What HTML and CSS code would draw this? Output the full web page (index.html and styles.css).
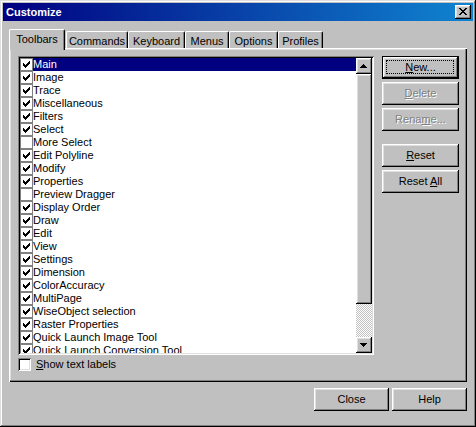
FILE: index.html
```html
<!DOCTYPE html>
<html>
<head>
<meta charset="utf-8">
<title>Customize</title>
<link rel="stylesheet" href="styles.css">
</head>
<body>
<div class="window">
  <div class="titlebar">
    <span class="title">Customize</span>
    <div class="close-btn raised"><svg class="xglyph" width="8" height="7" viewBox="0 0 8 7"><path d="M0 0h2v1H0z M6 0h2v1H6z M1 1h2v1H1z M5 1h2v1H5z M2 2h4v1H2z M3 3h2v1H3z M2 4h4v1H2z M1 5h2v1H1z M5 5h2v1H5z M0 6h2v1H0z M6 6h2v1H6z"/></svg></div>
  </div>
  <div class="content">
    <div class="tabs">
      <div class="tab active t-toolbars">Toolbars</div>
      <div class="tab t-commands">Commands</div>
      <div class="tab t-keyboard">Keyboard</div>
      <div class="tab t-menus">Menus</div>
      <div class="tab t-options">Options</div>
      <div class="tab t-profiles">Profiles</div>
    </div>
    <div class="panel">
      <div class="leftcol">
        <div class="listbox">
          <div class="items">
            <div class="row sel"><span class="cb"><svg class="chk" width="7" height="7" viewBox="0 0 7 7"><path d="M0 2h1v3H0z M1 3h1v3H1z M2 4h1v3H2z M3 3h1v3H3z M4 2h1v3H4z M5 1h1v3H5z M6 0h1v3H6z"/></svg></span><span class="lbl">Main</span></div>
            <div class="row"><span class="cb"><svg class="chk" width="7" height="7" viewBox="0 0 7 7"><path d="M0 2h1v3H0z M1 3h1v3H1z M2 4h1v3H2z M3 3h1v3H3z M4 2h1v3H4z M5 1h1v3H5z M6 0h1v3H6z"/></svg></span><span class="lbl">Image</span></div>
            <div class="row"><span class="cb"><svg class="chk" width="7" height="7" viewBox="0 0 7 7"><path d="M0 2h1v3H0z M1 3h1v3H1z M2 4h1v3H2z M3 3h1v3H3z M4 2h1v3H4z M5 1h1v3H5z M6 0h1v3H6z"/></svg></span><span class="lbl">Trace</span></div>
            <div class="row"><span class="cb"><svg class="chk" width="7" height="7" viewBox="0 0 7 7"><path d="M0 2h1v3H0z M1 3h1v3H1z M2 4h1v3H2z M3 3h1v3H3z M4 2h1v3H4z M5 1h1v3H5z M6 0h1v3H6z"/></svg></span><span class="lbl">Miscellaneous</span></div>
            <div class="row"><span class="cb"><svg class="chk" width="7" height="7" viewBox="0 0 7 7"><path d="M0 2h1v3H0z M1 3h1v3H1z M2 4h1v3H2z M3 3h1v3H3z M4 2h1v3H4z M5 1h1v3H5z M6 0h1v3H6z"/></svg></span><span class="lbl">Filters</span></div>
            <div class="row"><span class="cb"><svg class="chk" width="7" height="7" viewBox="0 0 7 7"><path d="M0 2h1v3H0z M1 3h1v3H1z M2 4h1v3H2z M3 3h1v3H3z M4 2h1v3H4z M5 1h1v3H5z M6 0h1v3H6z"/></svg></span><span class="lbl">Select</span></div>
            <div class="row"><span class="cb"></span><span class="lbl">More Select</span></div>
            <div class="row"><span class="cb"><svg class="chk" width="7" height="7" viewBox="0 0 7 7"><path d="M0 2h1v3H0z M1 3h1v3H1z M2 4h1v3H2z M3 3h1v3H3z M4 2h1v3H4z M5 1h1v3H5z M6 0h1v3H6z"/></svg></span><span class="lbl">Edit Polyline</span></div>
            <div class="row"><span class="cb"><svg class="chk" width="7" height="7" viewBox="0 0 7 7"><path d="M0 2h1v3H0z M1 3h1v3H1z M2 4h1v3H2z M3 3h1v3H3z M4 2h1v3H4z M5 1h1v3H5z M6 0h1v3H6z"/></svg></span><span class="lbl">Modify</span></div>
            <div class="row"><span class="cb"><svg class="chk" width="7" height="7" viewBox="0 0 7 7"><path d="M0 2h1v3H0z M1 3h1v3H1z M2 4h1v3H2z M3 3h1v3H3z M4 2h1v3H4z M5 1h1v3H5z M6 0h1v3H6z"/></svg></span><span class="lbl">Properties</span></div>
            <div class="row"><span class="cb"></span><span class="lbl">Preview Dragger</span></div>
            <div class="row"><span class="cb"><svg class="chk" width="7" height="7" viewBox="0 0 7 7"><path d="M0 2h1v3H0z M1 3h1v3H1z M2 4h1v3H2z M3 3h1v3H3z M4 2h1v3H4z M5 1h1v3H5z M6 0h1v3H6z"/></svg></span><span class="lbl">Display Order</span></div>
            <div class="row"><span class="cb"><svg class="chk" width="7" height="7" viewBox="0 0 7 7"><path d="M0 2h1v3H0z M1 3h1v3H1z M2 4h1v3H2z M3 3h1v3H3z M4 2h1v3H4z M5 1h1v3H5z M6 0h1v3H6z"/></svg></span><span class="lbl">Draw</span></div>
            <div class="row"><span class="cb"><svg class="chk" width="7" height="7" viewBox="0 0 7 7"><path d="M0 2h1v3H0z M1 3h1v3H1z M2 4h1v3H2z M3 3h1v3H3z M4 2h1v3H4z M5 1h1v3H5z M6 0h1v3H6z"/></svg></span><span class="lbl">Edit</span></div>
            <div class="row"><span class="cb"><svg class="chk" width="7" height="7" viewBox="0 0 7 7"><path d="M0 2h1v3H0z M1 3h1v3H1z M2 4h1v3H2z M3 3h1v3H3z M4 2h1v3H4z M5 1h1v3H5z M6 0h1v3H6z"/></svg></span><span class="lbl">View</span></div>
            <div class="row"><span class="cb"><svg class="chk" width="7" height="7" viewBox="0 0 7 7"><path d="M0 2h1v3H0z M1 3h1v3H1z M2 4h1v3H2z M3 3h1v3H3z M4 2h1v3H4z M5 1h1v3H5z M6 0h1v3H6z"/></svg></span><span class="lbl">Settings</span></div>
            <div class="row"><span class="cb"><svg class="chk" width="7" height="7" viewBox="0 0 7 7"><path d="M0 2h1v3H0z M1 3h1v3H1z M2 4h1v3H2z M3 3h1v3H3z M4 2h1v3H4z M5 1h1v3H5z M6 0h1v3H6z"/></svg></span><span class="lbl">Dimension</span></div>
            <div class="row"><span class="cb"><svg class="chk" width="7" height="7" viewBox="0 0 7 7"><path d="M0 2h1v3H0z M1 3h1v3H1z M2 4h1v3H2z M3 3h1v3H3z M4 2h1v3H4z M5 1h1v3H5z M6 0h1v3H6z"/></svg></span><span class="lbl">ColorAccuracy</span></div>
            <div class="row"><span class="cb"><svg class="chk" width="7" height="7" viewBox="0 0 7 7"><path d="M0 2h1v3H0z M1 3h1v3H1z M2 4h1v3H2z M3 3h1v3H3z M4 2h1v3H4z M5 1h1v3H5z M6 0h1v3H6z"/></svg></span><span class="lbl">MultiPage</span></div>
            <div class="row"><span class="cb"><svg class="chk" width="7" height="7" viewBox="0 0 7 7"><path d="M0 2h1v3H0z M1 3h1v3H1z M2 4h1v3H2z M3 3h1v3H3z M4 2h1v3H4z M5 1h1v3H5z M6 0h1v3H6z"/></svg></span><span class="lbl">WiseObject selection</span></div>
            <div class="row"><span class="cb"><svg class="chk" width="7" height="7" viewBox="0 0 7 7"><path d="M0 2h1v3H0z M1 3h1v3H1z M2 4h1v3H2z M3 3h1v3H3z M4 2h1v3H4z M5 1h1v3H5z M6 0h1v3H6z"/></svg></span><span class="lbl">Raster Properties</span></div>
            <div class="row"><span class="cb"><svg class="chk" width="7" height="7" viewBox="0 0 7 7"><path d="M0 2h1v3H0z M1 3h1v3H1z M2 4h1v3H2z M3 3h1v3H3z M4 2h1v3H4z M5 1h1v3H5z M6 0h1v3H6z"/></svg></span><span class="lbl">Quick Launch Image Tool</span></div>
            <div class="row"><span class="cb"><svg class="chk" width="7" height="7" viewBox="0 0 7 7"><path d="M0 2h1v3H0z M1 3h1v3H1z M2 4h1v3H2z M3 3h1v3H3z M4 2h1v3H4z M5 1h1v3H5z M6 0h1v3H6z"/></svg></span><span class="lbl">Quick Launch Conversion Tool</span></div>
          </div>
          <div class="scrollbar">
            <div class="sb-btn raised"><svg class="arrow up" width="7" height="4" viewBox="0 0 7 4"><path d="M3 0h1v1H3z M2 1h3v1H2z M1 2h5v1H1z M0 3h7v1H0z"/></svg></div>
            <div class="thumb raised"></div>
            <div class="track"></div>
            <div class="sb-btn raised"><svg class="arrow down" width="7" height="4" viewBox="0 0 7 4"><path d="M0 0h7v1H0z M1 1h5v1H1z M2 2h3v1H2z M3 3h1v1H3z"/></svg></div>
          </div>
        </div>
        <div class="option">
          <span class="cb3d"></span><span class="optlbl"><u>S</u>how text labels</span>
        </div>
      </div>
      <div class="side">
        <div class="btn default"><span class="focus"><u>N</u>ew...</span></div>
        <div class="btn disabled"><span><u>D</u>elete</span></div>
        <div class="btn disabled"><span>Rena<u>m</u>e...</span></div>
        <div class="btn spaced"><span><u>R</u>eset</span></div>
        <div class="btn"><span>Reset <u>A</u>ll</span></div>
      </div>
    </div>
    <div class="footer">
      <div class="btn wide"><span>Close</span></div>
      <div class="btn wide"><span>Help</span></div>
    </div>
  </div>
</div>
</body>
</html>
```

FILE: styles.css
```css
* {
  box-sizing: border-box;
}

html, body {
  margin: 0;
  padding: 0;
}

body {
  background: #c0c0c0;
  font-family: "Liberation Sans", Arial, sans-serif;
  font-size: 11px;
  line-height: 13px;
  color: #000;
}

u {
  text-decoration: underline;
  text-underline-offset: 1px;
}

.raised {
  background: #c0c0c0;
  box-shadow: inset -1px -1px #000, inset 1px 1px #fff, inset -2px -2px #808080, inset 2px 2px #dfdfdf;
}

.window {
  width: 476px;
  height: 427px;
  padding: 3px;
  background: #c0c0c0;
  box-shadow: inset -1px -1px #000, inset 1px 1px #dfdfdf, inset -2px -2px #808080, inset 2px 2px #fff;
  display: flex;
  flex-direction: column;
}

.titlebar {
  height: 18px;
  flex: none;
  display: flex;
  align-items: center;
  justify-content: space-between;
  padding: 0 2px 0 3px;
  background: linear-gradient(to right, #000080, #1084d0);
}

.title {
  color: #fff;
  font-weight: bold;
}

.close-btn {
  width: 16px;
  height: 14px;
  flex: none;
}

.xglyph {
  display: block;
  margin: 3px 0 0 4px;
  shape-rendering: crispEdges;
}

.content {
  flex: 1;
  display: flex;
  flex-direction: column;
  padding: 8px 6px 0;
}

/* Tabs */
.tabs {
  display: flex;
  align-items: flex-end;
  height: 19px;
  flex: none;
  position: relative;
  z-index: 1;
}

.tab {
  height: 17px;
  padding-top: 3px;
  text-align: center;
  white-space: nowrap;
  background: #c0c0c0;
  border-top: 1px solid #fff;
  border-left: 1px solid #fff;
  border-right: 1px solid #000;
  border-radius: 2px 2px 0 0;
  box-shadow: inset -1px 0 #808080;
}

.tab.active {
  height: 21px;
  margin-bottom: -2px;
}

.t-toolbars { width: 56px; }
.t-commands { width: 62px; margin-left: 1px; }
.t-keyboard { width: 57px; }
.t-menus { width: 44px; }
.t-options { width: 49px; }
.t-profiles { width: 45px; }

/* Panel */
.panel {
  height: 334px;
  flex: none;
  display: flex;
  gap: 8px;
  padding: 8px 8px 0 9px;
  box-shadow: inset 1px 1px #fff, inset -1px -1px #000, inset -2px -2px #808080, inset 2px 2px #dfdfdf;
}

.leftcol {
  width: 356px;
  flex: none;
  display: flex;
  flex-direction: column;
}

.listbox {
  height: 299px;
  display: flex;
  padding: 2px;
  background: #fff;
  box-shadow: inset 1px 1px #808080, inset -1px -1px #fff, inset 2px 2px #000, inset -2px -2px #dfdfdf;
}

.items {
  flex: 1;
  overflow: hidden;
}

.row {
  height: 13px;
  display: flex;
  align-items: center;
  white-space: nowrap;
}

.row.sel {
  background: #000080;
  color: #fff;
}

.cb {
  width: 13px;
  height: 13px;
  flex: none;
  border: 1px solid #808080;
  background: #fff;
}

.chk {
  display: block;
  margin: 2px 0 0 2px;
  shape-rendering: crispEdges;
}

.scrollbar {
  width: 16px;
  flex: none;
  display: flex;
  flex-direction: column;
}

.sb-btn {
  height: 16px;
  flex: none;
}

.arrow {
  display: block;
  shape-rendering: crispEdges;
}

.arrow.up {
  margin: 6px 0 0 4px;
}

.arrow.down {
  margin: 6px 0 0 4px;
}

.thumb {
  height: 230px;
  flex: none;
}

.track {
  flex: 1;
  background-image: repeating-conic-gradient(#fff 0 25%, #c0c0c0 0 50%);
  background-size: 2px 2px;
}

.option {
  display: flex;
  align-items: center;
  height: 13px;
  margin-top: 3px;
}

.cb3d {
  width: 13px;
  height: 13px;
  flex: none;
  margin-right: 5px;
  background: #fff;
  box-shadow: inset 1px 1px #808080, inset -1px -1px #fff, inset 2px 2px #000, inset -2px -2px #dfdfdf;
}

/* Buttons */
.side {
  width: 77px;
  flex: none;
  display: flex;
  flex-direction: column;
  gap: 3px;
}

.btn {
  height: 23px;
  flex: none;
  display: flex;
  align-items: center;
  justify-content: center;
  position: relative;
  white-space: nowrap;
  background: #c0c0c0;
  box-shadow: inset -1px -1px #000, inset 1px 1px #fff, inset -2px -2px #808080, inset 2px 2px #dfdfdf;
}

.btn.default {
  box-shadow: inset 0 0 0 1px #000, inset -2px -2px #000, inset 2px 2px #fff, inset -3px -3px #808080, inset 3px 3px #dfdfdf;
}

.btn.default::after {
  content: "";
  position: absolute;
  left: 4px;
  top: 4px;
  right: 5px;
  bottom: 5px;
  border: 1px dotted #000;
}

.btn.disabled {
  color: #808080;
  text-shadow: 1px 1px #fff;
}

.btn.spaced {
  margin-top: 10px;
}

.footer {
  display: flex;
  justify-content: flex-end;
  gap: 3px;
  margin-top: 6px;
}

.btn.wide {
  width: 75px;
}
```
